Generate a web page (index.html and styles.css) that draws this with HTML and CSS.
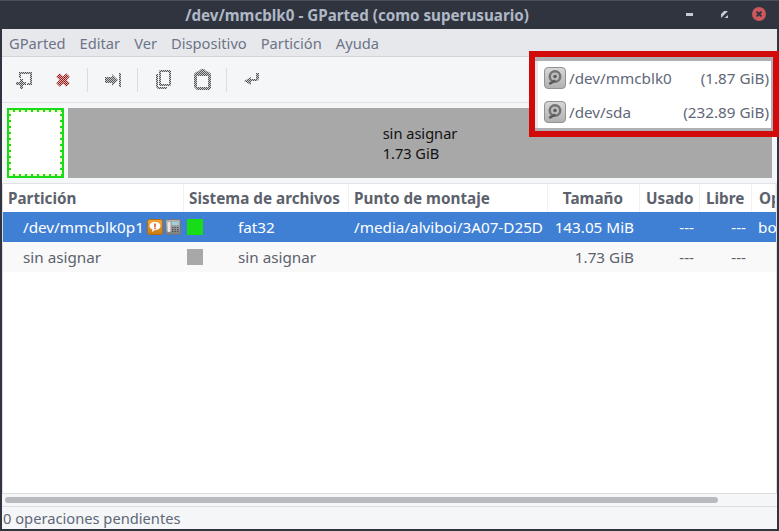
FILE: index.html
```html
<!DOCTYPE html>
<html lang="es">
<head>
<meta charset="utf-8">
<title>/dev/mmcblk0 - GParted</title>
<link rel="stylesheet" href="styles.css">
</head>
<body>
<svg class="defs" width="0" height="0" aria-hidden="true">
  <defs>
    <pattern id="dither" width="2" height="2" patternUnits="userSpaceOnUse">
      <rect width="2" height="2" fill="#c9cacb"/>
      <rect width="1" height="1" fill="#555"/>
      <rect x="1" y="1" width="1" height="1" fill="#555"/>
    </pattern>
    <pattern id="dither-red" width="2" height="2" patternUnits="userSpaceOnUse">
      <rect width="2" height="2" fill="#d8b4b4"/>
      <rect width="1" height="1" fill="#b01c1c"/>
      <rect x="1" y="1" width="1" height="1" fill="#8a1c1c"/>
    </pattern>
    <linearGradient id="disk-bg" x1="0" y1="0" x2="0" y2="1">
      <stop offset="0" stop-color="#d8d8d8"/>
      <stop offset="1" stop-color="#b0b0b0"/>
    </linearGradient>
    <linearGradient id="orange" x1="0" y1="0" x2="0" y2="1">
      <stop offset="0" stop-color="#f4a638"/>
      <stop offset="1" stop-color="#c97a14"/>
    </linearGradient>
    <linearGradient id="phone" x1="0" y1="0" x2="0" y2="1">
      <stop offset="0" stop-color="#b4b6b8"/>
      <stop offset="1" stop-color="#7c7e80"/>
    </linearGradient>
    <symbol id="disk" viewBox="0 0 22 22">
      <rect x="0.5" y="0.5" width="21" height="21" rx="3.500" fill="url(#disk-bg)" stroke="#929292"/>
      <circle cx="11" cy="9.500" r="6.500" fill="#737373"/>
      <circle cx="11" cy="9.500" r="4" fill="#bdbdbd"/>
      <circle cx="11" cy="9.500" r="1.800" fill="#5e5e5e"/>
      <path d="M4.500 16 L10.500 12.500 L12 14.500 L6 18 Z" fill="#5a5a5a"/>
    </symbol>
  </defs>
</svg>

<div class="window">
  <header class="titlebar">
    <div class="title">/dev/mmcblk0 - GParted (como superusuario)</div>
    <div class="controls">
      <svg class="ctl-min" width="7" height="3" viewBox="0 0 7 3"><rect width="7" height="3" fill="#c5cad3"/></svg>
      <svg class="ctl-max" width="7" height="7" viewBox="0 0 7 7"><path d="M0 3 L3 0 H7 L0 7 Z M7 4 V7 H3.500 Z" fill="#c5cad3"/></svg>
      <svg class="ctl-close" width="14" height="14" viewBox="0 0 14 14"><circle cx="7" cy="7" r="7" fill="#cc575d"/><path d="M4.600 4.600 L9.400 9.400 M9.400 4.600 L4.600 9.400" stroke="#2f343f" stroke-width="2"/></svg>
    </div>
  </header>

  <main class="content">
    <nav class="menubar">
      <span class="menu-item">GParted</span>
      <span class="menu-item">Editar</span>
      <span class="menu-item">Ver</span>
      <span class="menu-item">Dispositivo</span>
      <span class="menu-item">Partición</span>
      <span class="menu-item">Ayuda</span>
    </nav>

    <div class="toolbar">
      <span class="tool"><svg width="16" height="18" viewBox="0 0 16 18"><path d="M3 1 H16 V14 H11 V12 H14 V3 H5 V7 H3 Z" fill="url(#dither)"/><path d="M4 8 H7 V11 H10 V14 H7 V18 H4 V14 H0 V11 H4 Z" fill="url(#dither)"/></svg></span>
      <span class="tool"><svg width="16" height="16" viewBox="0 0 16 16"><path d="M3 3 L13 13 M13 3 L3 13" stroke="url(#dither-red)" stroke-width="5" fill="none"/></svg></span>
      <span class="sep"></span>
      <span class="tool"><svg width="16" height="14" viewBox="0 0 16 14"><path d="M0 4 H7 V1 L13 7 L7 13 V10 H0 Z" fill="url(#dither)"/><rect x="14" y="0" width="2" height="14" fill="url(#dither)"/></svg></span>
      <span class="sep"></span>
      <span class="tool"><svg width="16" height="19" viewBox="0 0 16 19"><path d="M1 4 H3 V17 H12 V19 H3 L1 17 Z" fill="url(#dither)"/><path d="M4 1 L5 0 H15 L16 1 V15 L15 16 H5 L4 15 Z M6 2 V14 H14 V2 Z" fill="url(#dither)" fill-rule="evenodd"/></svg></span>
      <span class="tool"><svg width="17" height="21" viewBox="0 0 17 21"><path d="M5 2 L7 0 H10 L12 2 L15 3 L17 5 V19 L15 21 H3 L0 18 V5 L2 3 Z M3 7 V18 H14 V7 Z" fill="url(#dither)" fill-rule="evenodd"/></svg></span>
      <span class="sep"></span>
      <span class="tool"><svg width="16" height="13" viewBox="0 0 16 13"><path d="M12 0 H15 V6 L13 8 H7 V12 L0 8 L7 4 V6 H12 Z" fill="url(#dither)"/></svg></span>
    </div>

    <section class="graph">
      <div class="graph-part"><div class="graph-part-inner"></div></div>
      <div class="graph-free"><div class="graph-label">sin asignar<br>1.73 GiB</div></div>
    </section>

    <section class="table">
      <div class="row head">
        <div class="cell">Partición</div>
        <div class="cell">Sistema de archivos</div>
        <div class="cell">Punto de montaje</div>
        <div class="cell num">Tamaño</div>
        <div class="cell">Usado</div>
        <div class="cell">Libre</div>
        <div class="cell">Op</div>
      </div>
      <div class="row selected">
        <div class="cell part"><span class="part-name">/dev/mmcblk0p1</span>
          <svg class="flag" width="16" height="16" viewBox="0 0 16 16"><rect x="0.5" y="0.5" width="15" height="15" rx="2" fill="url(#orange)" stroke="#b06c12"/><path d="M8 3 C12 3 13.500 4.800 13.500 7 C13.500 9.200 11.500 11 8 11 L5 13 L5.500 10.400 C3.500 9.800 2.500 8.600 2.500 7 C2.500 4.800 4 3 8 3 Z" fill="#fff"/><rect x="7.200" y="4.500" width="1.600" height="3.500" fill="#d9541e"/><rect x="7.200" y="8.600" width="1.600" height="1.500" fill="#d9541e"/></svg>
          <svg class="flag" width="16" height="16" viewBox="0 0 16 16"><rect x="0.5" y="0.5" width="15" height="15" rx="2" fill="url(#phone)" stroke="#73767a"/><rect x="2.500" y="3" width="3" height="10" rx="1" fill="#e8e8e8"/><rect x="7" y="3" width="6.500" height="3" fill="#9fd0dc"/><path d="M7 8 h1.500 v1 h-1.500 z M9.500 8 h1.500 v1 h-1.500 z M12 8 h1.500 v1 h-1.500 z M7 10 h1.500 v1 h-1.500 z M9.500 10 h1.500 v1 h-1.500 z M12 10 h1.500 v1 h-1.500 z M7 12 h1.500 v1 h-1.500 z M9.500 12 h1.500 v1 h-1.500 z M12 12 h1.500 v1 h-1.500 z" fill="#4d4f52"/></svg>
        </div>
        <div class="cell fs"><span class="swatch green"></span><span>fat32</span></div>
        <div class="cell mount">/media/alviboi/3A07-D25D</div>
        <div class="cell num">143.05 MiB</div>
        <div class="cell num">---</div>
        <div class="cell num">---</div>
        <div class="cell flags">bo</div>
      </div>
      <div class="row alt">
        <div class="cell part"><span class="part-name">sin asignar</span></div>
        <div class="cell fs"><span class="swatch grey"></span><span>sin asignar</span></div>
        <div class="cell mount"></div>
        <div class="cell num">1.73 GiB</div>
        <div class="cell num">---</div>
        <div class="cell num">---</div>
        <div class="cell flags"></div>
      </div>
      <div class="table-fill"></div>
    </section>

    <div class="hscroll"><div class="hthumb"></div></div>
    <footer class="status">0 operaciones pendientes</footer>
  </main>

  <div class="callout">
    <div class="popup">
      <div class="dev"><svg class="dev-icon" width="22" height="22"><use href="#disk"/></svg><span class="dev-name">/dev/mmcblk0</span><span class="dev-size">(1.87 GiB)</span></div>
      <div class="dev"><svg class="dev-icon" width="22" height="22"><use href="#disk"/></svg><span class="dev-name">/dev/sda</span><span class="dev-size">(232.89 GiB)</span></div>
    </div>
  </div>
</div>
</body>
</html>
```

FILE: styles.css
```css
* { box-sizing: border-box; }
html, body { margin: 0; padding: 0; }
body { width: 779px; height: 531px; overflow: hidden; background: #2f343f; font-family: "Noto Sans", sans-serif; font-size: 15.25px; color: #5c616c; }
.defs { position: absolute; }
.window { position: relative; width: 779px; height: 531px; display: flex; flex-direction: column; background: #2f343f; border-top: 1px solid #4a4f5a; }
.titlebar { height: 28px; flex: none; display: flex; align-items: center; }
.title { width: 714px; flex: none; text-align: center; font-size: 15.2px; font-weight: 700; color: #afb8c5; }
.controls { flex: none; margin-left: -28px; display: flex; align-items: center; margin-top: -2px; }
.ctl-max { margin-left: 28px; }
.ctl-close { margin-left: 24px; }

.content { flex: none; height: 500px; margin: 0 2px; display: flex; flex-direction: column; background: #f5f6f7; }
.menubar { height: 28px; flex: none; display: flex; align-items: center; background: #e7e8eb; border-bottom: 1px solid #d3d5da; color: #6b7488; font-size: 14.7px; }
.menu-item { padding: 0 7px; }

.toolbar { height: 46px; flex: none; display: flex; align-items: center; padding-left: 2px; border-bottom: 1px solid #e1e2e7; }
.tool { width: 39px; height: 24px; padding-left: 12px; display: flex; align-items: center; }
.sep { width: 1px; height: 24px; margin: 0 5px; background: #dcdde1; }

.graph { height: 81px; flex: none; display: flex; padding: 5px; gap: 4px; border-bottom: 1px solid #e1e2e7; }
.graph-part { width: 57px; height: 70px; padding: 2px; background: #19dc19; }
.graph-part-inner {
  height: 100%;
  border: 2px solid transparent;
  background-color: #19dc19;
  background-repeat: no-repeat;
  background-origin: padding-box, border-box, border-box, border-box, border-box;
  background-clip: padding-box, border-box, border-box, border-box, border-box;
  background-image:
    linear-gradient(#fff, #fff),
    repeating-linear-gradient(90deg, #f3f8cf 0 4px, #19dc19 4px 6px),
    repeating-linear-gradient(90deg, #f3f8cf 0 4px, #19dc19 4px 6px),
    repeating-linear-gradient(180deg, #f3f8cf 0 4px, #19dc19 4px 6px),
    repeating-linear-gradient(180deg, #f3f8cf 0 4px, #19dc19 4px 6px);
  background-size: 100% 100%, 100% 2px, 100% 2px, 2px 100%, 2px 100%;
  background-position: 0 0, 0 0, 0 100%, 0 0, 100% 0;
}
.graph-free { flex: 1; height: 70px; background: #a8a8a8; display: flex; align-items: center; justify-content: center; color: #111; line-height: 20px; font-size: 14.6px; }

.table { flex: 1; min-height: 0; display: flex; flex-direction: column; background: #fff; border-left: 1px solid #dcdde0; border-right: 1px solid #dcdde0; overflow: hidden; }
.row { display: grid; grid-template-columns: 181px 165px 199px 92px 60px 52px 1fr; height: 30px; flex: none; align-items: center; }
.cell { padding-left: 5px; white-space: nowrap; overflow: hidden; }
.head { height: 28px; font-weight: 700; align-items: stretch; }
.head .cell { display: flex; align-items: center; border-right: 1px solid #f0f0f1; }
.head .cell:nth-child(n+5) { padding-left: 6px; }
.head .cell:last-child { padding-left: 7px; }
.head .num { justify-content: flex-end; padding-right: 16px; }
.selected { background: #4080d4; color: #fff; }
.alt { background: #f9f9f9; }
.part { padding-left: 20px; display: flex; align-items: center; }
.part-name { width: 119px; flex: none; margin-right: 3px; }
.flag { margin-left: 2px; flex: none; }
.fs { padding-left: 3px; display: flex; align-items: center; gap: 35px; }
.swatch { width: 16px; height: 16px; flex: none; }
.green { background: #19dc19; }
.grey { background: #a8a8a8; }
.num { text-align: right; padding-right: 6px; }
.flags { padding-left: 6px; }
.table-fill { flex: 1; }

.hscroll { height: 14px; flex: none; padding-top: 3px; padding-left: 3px; background: #f5f6f7; border-top: 1px solid #dcdde0; border-bottom: 1px solid #dcdde0; }
.hthumb { width: 713px; height: 6px; border-radius: 3px; background: #b8babf; }
.status { height: 22px; flex: none; display: flex; align-items: center; padding-left: 1px; color: #5f6878; font-size: 14.7px; }

.callout { position: absolute; left: 529px; top: 50px; width: 250px; height: 86px; border: 6px solid #d10a0a; background: #aeb0b4; padding: 4px 2px 3px 0; }
.popup { height: 100%; background: #fff; border-left: 3px solid #e6e7e9; padding: 0 2px 0 6px; color: #5f6878; }
.dev { height: 34px; display: flex; align-items: center; }
.dev-icon { flex: none; margin-right: 3px; }
.dev-name { flex: 1; }
```
